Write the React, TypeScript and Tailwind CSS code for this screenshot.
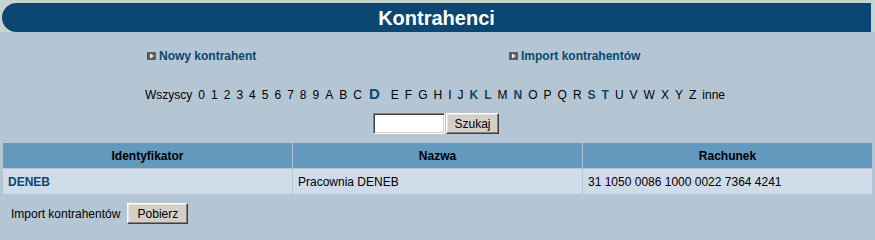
import React from 'react'

const FONT = "font-['Liberation_Sans',Arial,sans-serif]"

const CHARS = ['0', '1', '2', '3', '4', '5', '6', '7', '8', '9', 'A', 'B', 'C', 'D', 'E', 'F', 'G', 'H', 'I', 'J', 'K', 'L', 'M', 'N', 'O', 'P', 'Q', 'R', 'S', 'T', 'U', 'V', 'W', 'X', 'Y', 'Z']
const LINKED = ['K', 'L', 'N', 'S', 'T']

function Arrow() {
  return (
    <svg width="9" height="8" viewBox="0 0 9 8" className="mr-[3px] shrink-0">
      <rect width="9" height="8" fill="#5c5c5c" />
      <path d="M3 1.5 L7 4 L3 6.5 Z" fill="#ececec" />
    </svg>
  )
}

export default function App() {
  return (
    <div className={`min-h-screen bg-[#b4c6d4] text-[12px] text-black ${FONT}`}>
      {/* nagłówek */}
      <div className="bg-[#c4d5d2] pt-[3px] pl-[2px] pr-[4px]">
        <div className="flex h-[29px] items-center justify-center rounded-l-full rounded-r-[15px] bg-[#0b4770]">
          <span className="text-[20px] font-bold leading-none text-white">Kontrahenci</span>
        </div>
      </div>

      {/* linki */}
      <div className="mt-[17px] flex pl-[147px] leading-[14px]">
        <a className="flex w-[362px] items-center font-bold text-[#0b4770]">
          <Arrow />
          Nowy kontrahent
        </a>
        <a className="flex items-center font-bold text-[#0b4770]">
          <Arrow />
          Import kontrahentów
        </a>
      </div>

      {/* alfabet */}
      <div className="mt-[22px] flex h-[18px] items-baseline justify-center gap-[6px] pr-[5px] leading-[18px]">
        <span>Wszyscy</span>
        {CHARS.map((c) =>
          c === 'D' ? (
            <span key={c} className="ml-[1px] mr-[5px] text-[15px] font-bold text-[#0b4770]">
              {c}
            </span>
          ) : LINKED.includes(c) ? (
            <a key={c} className="font-bold text-[#0b4770]">
              {c}
            </a>
          ) : (
            <span key={c}>{c}</span>
          )
        )}
        <span>inne</span>
      </div>

      {/* szukaj */}
      <div className="mt-[10px] flex justify-center gap-[1px] pr-[3px]">
        <input
          className="h-[21px] w-[72px] border border-t-[#808080] border-l-[#808080] border-r-white border-b-white bg-white px-[2px] shadow-[inset_1px_1px_#404040,inset_-1px_-1px_#d4d0c8] outline-none"
        />
        <button className="h-[21px] w-[53px] border border-t-white border-l-white border-r-[#404040] border-b-[#404040] bg-[#d4d0c8] shadow-[inset_-1px_-1px_#808080,inset_1px_1px_#e8e6e0]">
          Szukaj
        </button>
      </div>

      {/* tabela */}
      <div className="mx-[3px] mt-[9px] grid grid-cols-3 gap-[1px]">
        <div className="flex h-[25px] items-center justify-center bg-[#6399bd] font-bold">Identyfikator</div>
        <div className="flex h-[25px] items-center justify-center bg-[#6399bd] font-bold">Nazwa</div>
        <div className="flex h-[25px] items-center justify-center bg-[#6399bd] font-bold">Rachunek</div>
        <div className="flex h-[25px] items-center bg-[#d0dbea] px-[5px]">
          <a className="font-bold text-[#0b4770]">DENEB</a>
        </div>
        <div className="flex h-[25px] items-center bg-[#d0dbea] px-[5px]">Pracownia DENEB</div>
        <div className="flex h-[25px] items-center bg-[#d0dbea] px-[5px]">31 1050 0086 1000 0022 7364 4241</div>
      </div>

      {/* import */}
      <div className="mt-[9px] flex items-center pl-[11px]">
        <span>Import kontrahentów</span>
        <button className="ml-[7px] h-[21px] w-[61px] border border-t-white border-l-white border-r-[#404040] border-b-[#404040] bg-[#d4d0c8] shadow-[inset_-1px_-1px_#808080,inset_1px_1px_#e8e6e0]">
          Pobierz
        </button>
      </div>
    </div>
  )
}
